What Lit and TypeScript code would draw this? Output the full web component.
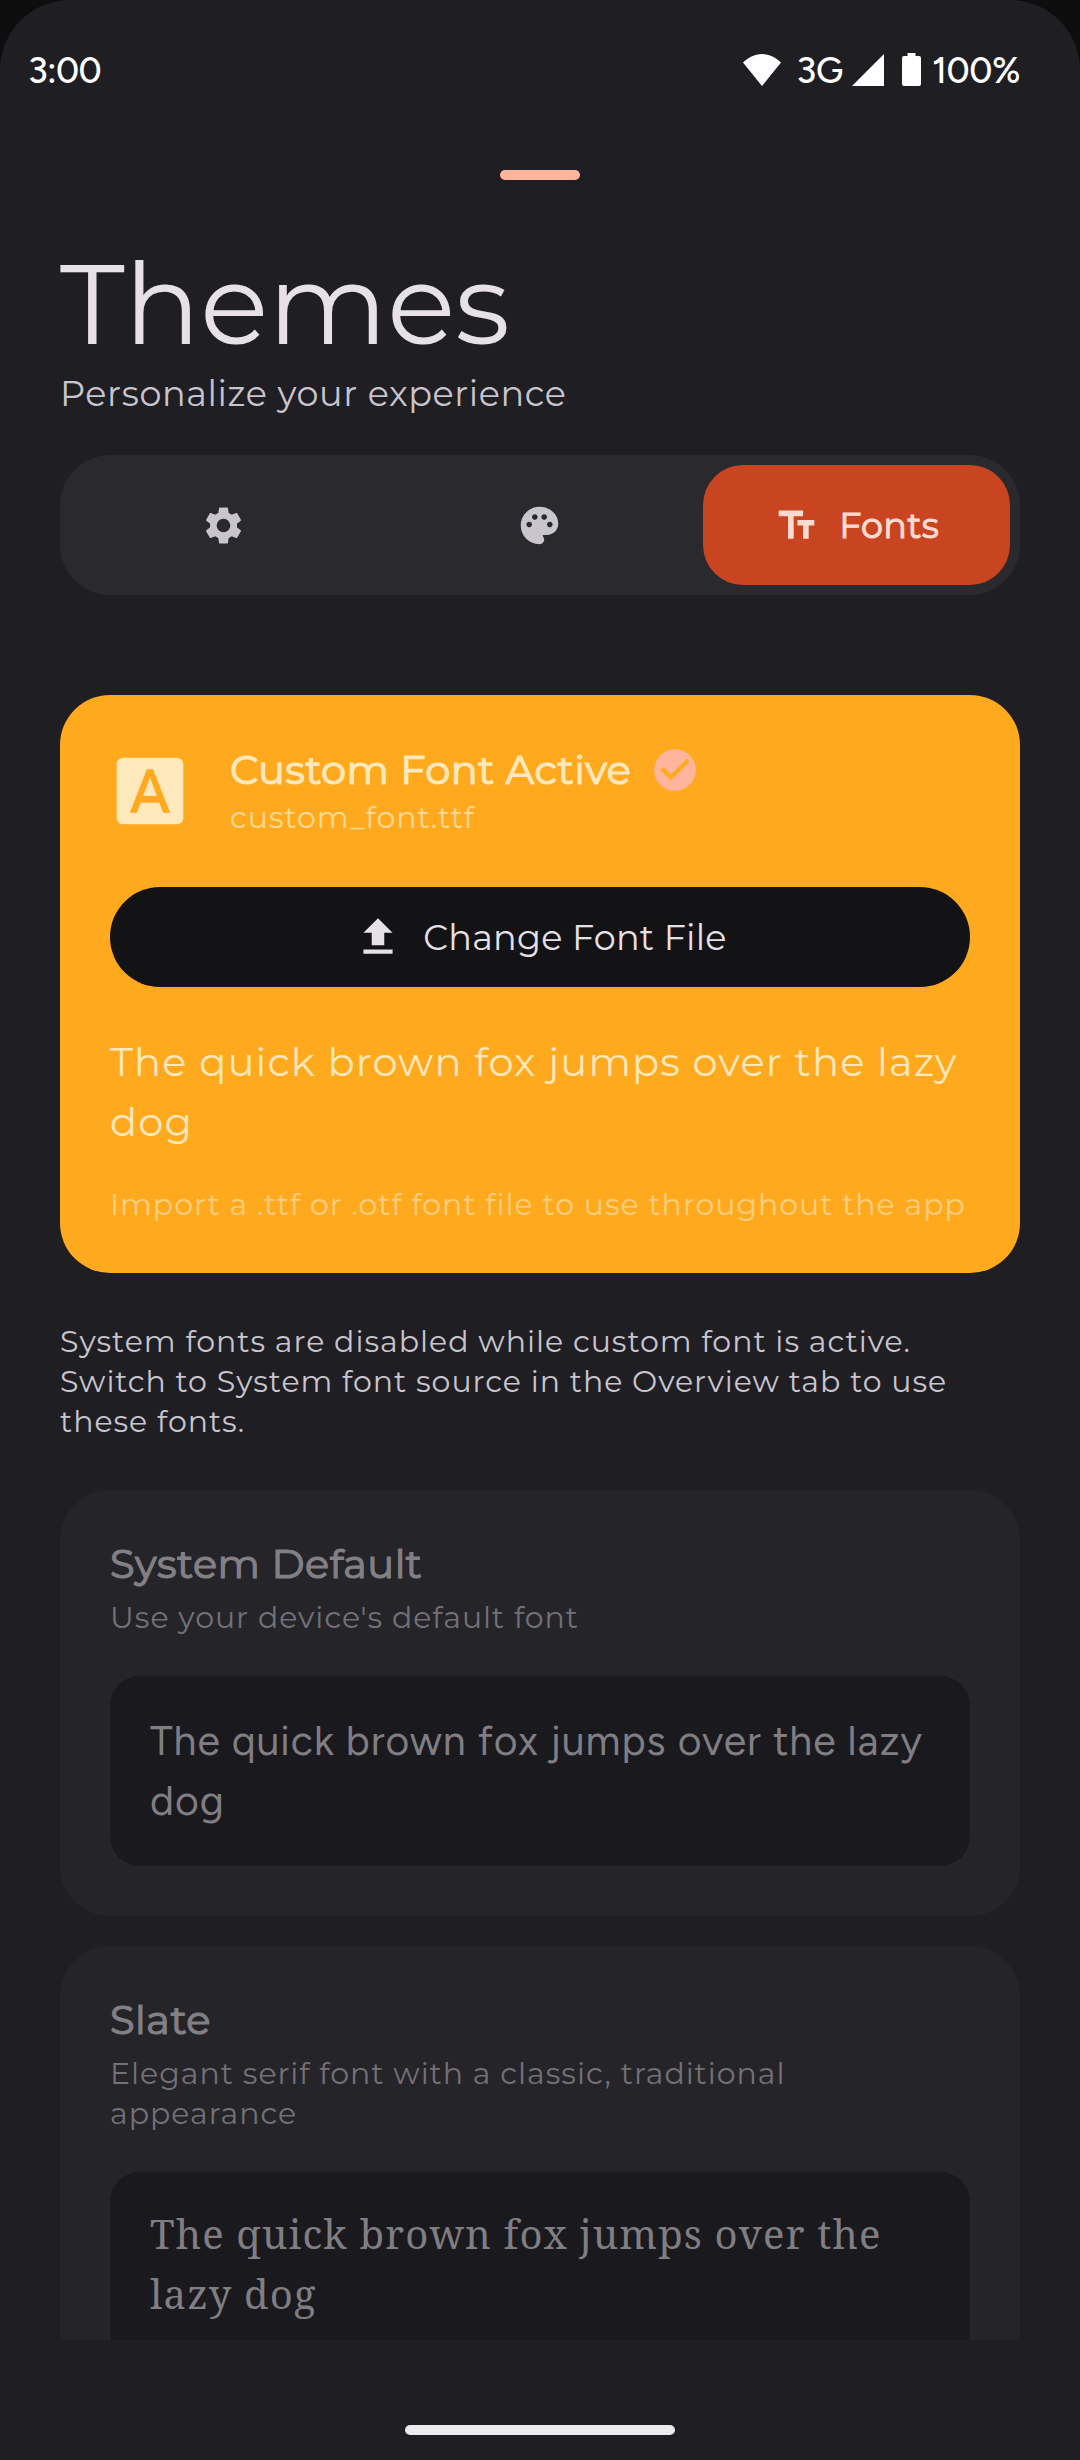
import { LitElement, html, css, svg } from 'lit';
import { customElement, property } from 'lit/decorators.js';
import { classMap } from 'lit/directives/class-map.js';

const ICONS: Record<string, string> = {
  settings:
    'M19.14 12.94c.04-.3.06-.61.06-.94 0-.32-.02-.64-.07-.94l2.03-1.58c.18-.14.23-.41.12-.61l-1.92-3.32c-.12-.22-.37-.29-.59-.22l-2.39.96c-.5-.38-1.03-.7-1.62-.94l-.36-2.54c-.04-.24-.24-.41-.48-.41h-3.84c-.24 0-.43.17-.47.41l-.36 2.54c-.59.24-1.13.57-1.62.94l-2.39-.96c-.22-.08-.47 0-.59.22L2.74 8.87c-.12.21-.08.47.12.61l2.03 1.58c-.05.3-.09.63-.09.94s.02.64.07.94l-2.03 1.58c-.18.14-.23.41-.12.61l1.92 3.32c.12.22.37.29.59.22l2.39-.96c.5.38 1.03.7 1.62.94l.36 2.54c.05.24.24.41.48.41h3.84c.24 0 .44-.17.47-.41l.36-2.54c.59-.24 1.13-.56 1.62-.94l2.39.96c.22.08.47 0 .59-.22l1.92-3.32c.12-.22.07-.47-.12-.61l-2.01-1.58zM12 15.6c-1.98 0-3.6-1.62-3.6-3.6s1.62-3.6 3.6-3.6 3.6 1.62 3.6 3.6-1.62 3.6-3.6 3.6z',
  palette:
    'M12 2C6.49 2 2 6.49 2 12s4.49 10 10 10c1.38 0 2.5-1.12 2.5-2.5 0-.61-.23-1.2-.64-1.67-.08-.1-.13-.21-.13-.33 0-.28.22-.5.5-.5H16c3.31 0 6-2.69 6-6 0-4.96-4.49-9-10-9zm-5.5 11c-.83 0-1.5-.67-1.5-1.5S5.67 10 6.5 10s1.5.67 1.5 1.5S7.33 13 6.5 13zm3-4C8.67 9 8 8.33 8 7.5S8.67 6 9.5 6s1.5.67 1.5 1.5S10.33 9 9.5 9zm5 0c-.83 0-1.5-.67-1.5-1.5S13.67 6 14.5 6s1.5.67 1.5 1.5S15.33 9 14.5 9zm3 4c-.83 0-1.5-.67-1.5-1.5s.67-1.5 1.5-1.5 1.5.67 1.5 1.5-.67 1.5-1.5 1.5z',
  textFields: 'M2.5 4v3h5v12h3V7h5V4h-13zm19 5h-9v3h3v7h3v-7h3V9z',
  fontDownload:
    'M9.93 13.5h4.14L12 7.98zM20 2H4c-1.1 0-2 .9-2 2v16c0 1.1.9 2 2 2h16c1.1 0 2-.9 2-2V4c0-1.1-.9-2-2-2zm-4.05 16.5l-1.14-3H9.17l-1.12 3H5.96l5.11-13h1.86l5.11 13h-2.09z',
  checkCircle:
    'M12 2C6.48 2 2 6.48 2 12s4.48 10 10 10 10-4.48 10-10S17.52 2 12 2zm-2 15l-5-5 1.41-1.41L10 14.17l7.59-7.59L19 8l-9 9z',
  upload: 'M9 16h6v-6h4l-7-7-7 7h4zm-4 2h14v2H5z',
};

@customElement('ui-icon')
export class UiIcon extends LitElement {
  @property() name = '';
  static styles = css`
    :host { display: block; flex: none; }
    svg { display: block; width: 100%; height: 100%; fill: currentColor; }
  `;
  render() {
    return html`<svg viewBox="0 0 24 24" aria-hidden="true">${svg`<path d=${ICONS[this.name] ?? ''}></path>`}</svg>`;
  }
}

@customElement('status-bar')
export class StatusBar extends LitElement {
  static styles = css`
    :host {
      display: flex; align-items: flex-start; height: 50px; padding: 50px 60px 0 28px; color: #fff;
      font: 500 36px/42px Figtree, Inter, Roboto, sans-serif;
    }
    svg { display: block; fill: #fff; flex: none; }
    .time { flex: 1; letter-spacing: -0.6px; }
    .wifi { margin: 4px 15px 0 0; }
    .net { margin-right: 9px; letter-spacing: -0.2px; }
    .signal { margin: 4px 18px 0 0; }
    .battery { margin: 3px 11px 0 0; }
    .level { letter-spacing: -0.45px; }
  `;
  render() {
    return html`
      <span class="time">3:00</span>
      <svg class="wifi" width="38" height="32" viewBox="0 0 38 32"><path d="M19 32 0 8.6C5 3.600 11.500 0 19 0s14 3.600 19 8.600z"></path></svg>
      <span class="net">3G</span>
      <svg class="signal" width="32" height="32" viewBox="0 0 32 32"><path d="M32 0v32H0z"></path></svg>
      <svg class="battery" width="19" height="33" viewBox="0 0 19 33"><path d="M5.500 0h8v3h3.500a2 2 0 0 1 2 2v26a2 2 0 0 1-2 2H2a2 2 0 0 1-2-2V5a2 2 0 0 1 2-2h3.500z"></path></svg>
      <span class="level">100%</span>
    `;
  }
}

@customElement('font-card')
export class FontCard extends LitElement {
  @property() name = '';
  @property() description = '';
  @property() face = 'system';
  static styles = css`
    :host {
      display: block; padding: 50px; border-radius: 50px; background: #252429;
      font-family: Montserrat, Inter, sans-serif; color: #828084;
    }
    .name { font-size: 40px; line-height: 50px; letter-spacing: 0.48px; -webkit-text-stroke: 1.2px currentColor; margin-top: -1px; }
    .desc { font-size: 30px; line-height: 40px; letter-spacing: 0.99px; color: #737176; margin-top: 9px; }
    .preview {
      box-sizing: border-box; height: 190px; margin-top: 38px; padding: 35px 40px; border-radius: 30px;
      background: #1a191d; color: #807e82; line-height: 60px;
    }
    .system { font-family: Figtree, Inter, sans-serif; font-size: 41px; letter-spacing: 0.95px; }
    .slate { font-family: 'Noto Serif', 'DejaVu Serif', serif; font-size: 40px; letter-spacing: 1.15px; padding-top: 32px; }
  `;
  render() {
    return html`
      <div class="name">${this.name}</div>
      <div class="desc">${this.description}</div>
      <div class=${classMap({ preview: true, [this.face]: true })}>The quick brown fox jumps over the lazy dog</div>
    `;
  }
}

@customElement('app-root')
export class AppRoot extends LitElement {
  static styles = css`
    :host { display: block; background: #0d0d0e; }
    .sheet {
      display: flex; flex-direction: column; box-sizing: border-box; width: 1080px; height: 2460px; overflow: hidden;
      border-radius: 70px 70px 0 0; background: #1f1e23; color: #c9c5ce;
      font-family: Montserrat, Inter, sans-serif;
    }
    .handle { width: 80px; height: 10px; margin: 70px auto 0; border-radius: 5px; background: #ffb59c; flex: none; }
    .body { height: 2160px; flex: none; overflow: hidden; padding: 0 60px; }
    h1 { margin: 59px 0 0; font-size: 112.5px; line-height: 129px; font-weight: 400; letter-spacing: -0.2px; color: #e6e1e6; }
    .subtitle { margin-top: 1px; font-size: 35px; line-height: 50px; letter-spacing: 0.63px; }
    .tabs {
      display: grid; grid-template-columns: repeat(3, 1fr); gap: 10px; margin-top: 36px; padding: 10px;
      border-radius: 50px; background: #2a292e;
    }
    .tab { display: flex; align-items: center; justify-content: center; gap: 20px; height: 120px; border-radius: 40px; }
    .tab ui-icon { width: 45px; height: 45px; }
    .tab.active { background: #c94420; color: #ffdbd1; }
    .tab-label { font-size: 35px; letter-spacing: 0.25px; -webkit-text-stroke: 1.1px currentColor; }
    .custom {
      box-sizing: border-box; height: 578px; margin-top: 100px; padding: 50px; border-radius: 50px;
      background: #ffa91f; color: #ffe8bb;
    }
    .custom-head { display: flex; align-items: flex-start; gap: 40px; height: 92px; }
    .custom-head > ui-icon { width: 80px; height: 80px; margin-top: 6px; }
    .custom-title { display: flex; align-items: center; gap: 19px; height: 50px; }
    .custom-name { font-size: 40px; line-height: 50px; letter-spacing: 0.38px; -webkit-text-stroke: 1.2px currentColor; }
    .custom-title ui-icon { width: 50px; height: 50px; color: #ffb59c; }
    .file { margin-top: 3px; font-size: 30px; line-height: 40px; letter-spacing: 0.95px; color: #ffdb97; }
    .button {
      display: flex; align-items: center; justify-content: center; gap: 20px; height: 100px; margin-top: 50px;
      border-radius: 50px; background: #131315; color: #e6e1e6; font-size: 35px; letter-spacing: 0.23px;
    }
    .button ui-icon { width: 50px; height: 50px; }
    .sample { margin-top: 45px; font-size: 40px; line-height: 60px; letter-spacing: 1.15px; }
    .hint { margin-top: 33px; font-size: 30px; line-height: 40px; letter-spacing: 0.98px; color: #ffd07f; white-space: nowrap; }
    .note { margin-top: 49px; font-size: 30px; line-height: 40px; letter-spacing: 0.97px; }
    .cards { display: flex; flex-direction: column; gap: 30px; margin-top: 48px; }
    .nav { width: 270px; height: 10px; margin: 85px auto 0; border-radius: 5px; background: #ececec; flex: none; }
  `;

  render() {
    return html`
      <div class="sheet">
        <status-bar></status-bar>
        <div class="handle"></div>
        <div class="body">
          <h1>Themes</h1>
          <div class="subtitle">Personalize your experience</div>
          <div class="tabs">
            <div class="tab"><ui-icon name="settings"></ui-icon></div>
            <div class="tab"><ui-icon name="palette"></ui-icon></div>
            <div class="tab active"><ui-icon name="textFields"></ui-icon><span class="tab-label">Fonts</span></div>
          </div>
          <section class="custom">
            <div class="custom-head">
              <ui-icon name="fontDownload"></ui-icon>
              <div>
                <div class="custom-title"><span class="custom-name">Custom Font Active</span><ui-icon name="checkCircle"></ui-icon></div>
                <div class="file">custom_font.ttf</div>
              </div>
            </div>
            <div class="button"><ui-icon name="upload"></ui-icon><span>Change Font File</span></div>
            <div class="sample">The quick brown fox jumps over the lazy dog</div>
            <div class="hint">Import a .ttf or .otf font file to use throughout the app</div>
          </section>
          <div class="note">System fonts are disabled while custom font is active. Switch to System font source in the Overview tab to use these fonts.</div>
          <div class="cards">
            <font-card name="System Default" description="Use your device's default font" face="system"></font-card>
            <font-card name="Slate" description="Elegant serif font with a classic, traditional appearance" face="slate"></font-card>
          </div>
        </div>
        <div class="nav"></div>
      </div>
    `;
  }
}
